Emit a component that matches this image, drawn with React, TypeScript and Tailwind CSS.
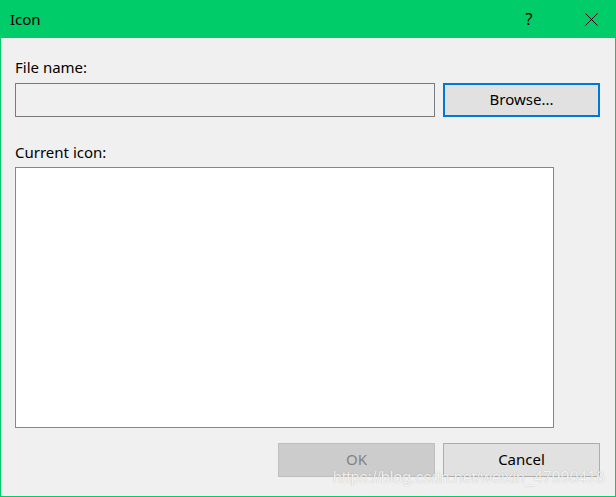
import React from "react";

export default function App() {
  return (
    <div
      className="relative w-[616px] h-[497px] flex flex-col bg-[#f0f0f0] border-x border-b border-[#00cc6a] text-[15px] text-black overflow-hidden"
      style={{ fontFamily: '"Noto Sans", "Open Sans", sans-serif' }}
    >
      <div className="h-[38px] -mx-px bg-[#00cc6a] flex items-center shrink-0">
        <span className="pl-[10px] leading-none flex-1">Icon</span>
        <span className="w-[46px] text-center text-[16px] leading-none mr-[16px]">?</span>
        <div className="w-[46px] h-[38px] flex items-center justify-center mr-[2px]">
          <svg width="13" height="13" viewBox="0 0 13 13">
            <path d="M0.5 0.5 L12.5 12.5 M12.5 0.5 L0.5 12.5" stroke="#000" strokeWidth="1" fill="none" />
          </svg>
        </div>
      </div>
      <div className="flex-1 flex flex-col pl-[14px] pr-[15px]">
        <div className="mt-[19px] h-[20px] leading-[20px]">File name:</div>
        <div className="mt-[6px] flex gap-[8px] h-[34px]">
          <div className="w-[420px] h-[34px] border border-[#7a7a7a] bg-[#f0f0f0]" />
          <button className="w-[157px] h-[34px] border-2 border-[#0078d7] bg-[#e1e1e1] flex items-center justify-center leading-none pb-[1px]">
            Browse...
          </button>
        </div>
        <div className="mt-[25px] h-[20px] leading-[20px]">Current icon:</div>
        <div className="mt-[5px] w-[539px] h-[261px] bg-white border border-[#828790]" />
        <div className="mt-[15px] flex justify-end gap-[8px]">
          <div className="w-[157px] h-[34px] border border-[#bfbfbf] bg-[#cccccc] text-[#838383] flex items-center justify-center leading-none pb-[1px]">
            OK
          </div>
          <div className="w-[157px] h-[34px] border border-[#adadad] bg-[#e1e1e1] flex items-center justify-center leading-none pb-[1px]">
            Cancel
          </div>
        </div>
      </div>
      <span
        className="absolute right-[10px] bottom-[10px] text-[16px] leading-[16px] text-white/85 whitespace-nowrap"
        style={{ fontFamily: '"Liberation Sans", Arial, sans-serif', textShadow: "0 0 1px rgba(0,0,0,0.3)" }}
      >
        https://blog.csdn.net/weixin_47990416
      </span>
    </div>
  );
}
